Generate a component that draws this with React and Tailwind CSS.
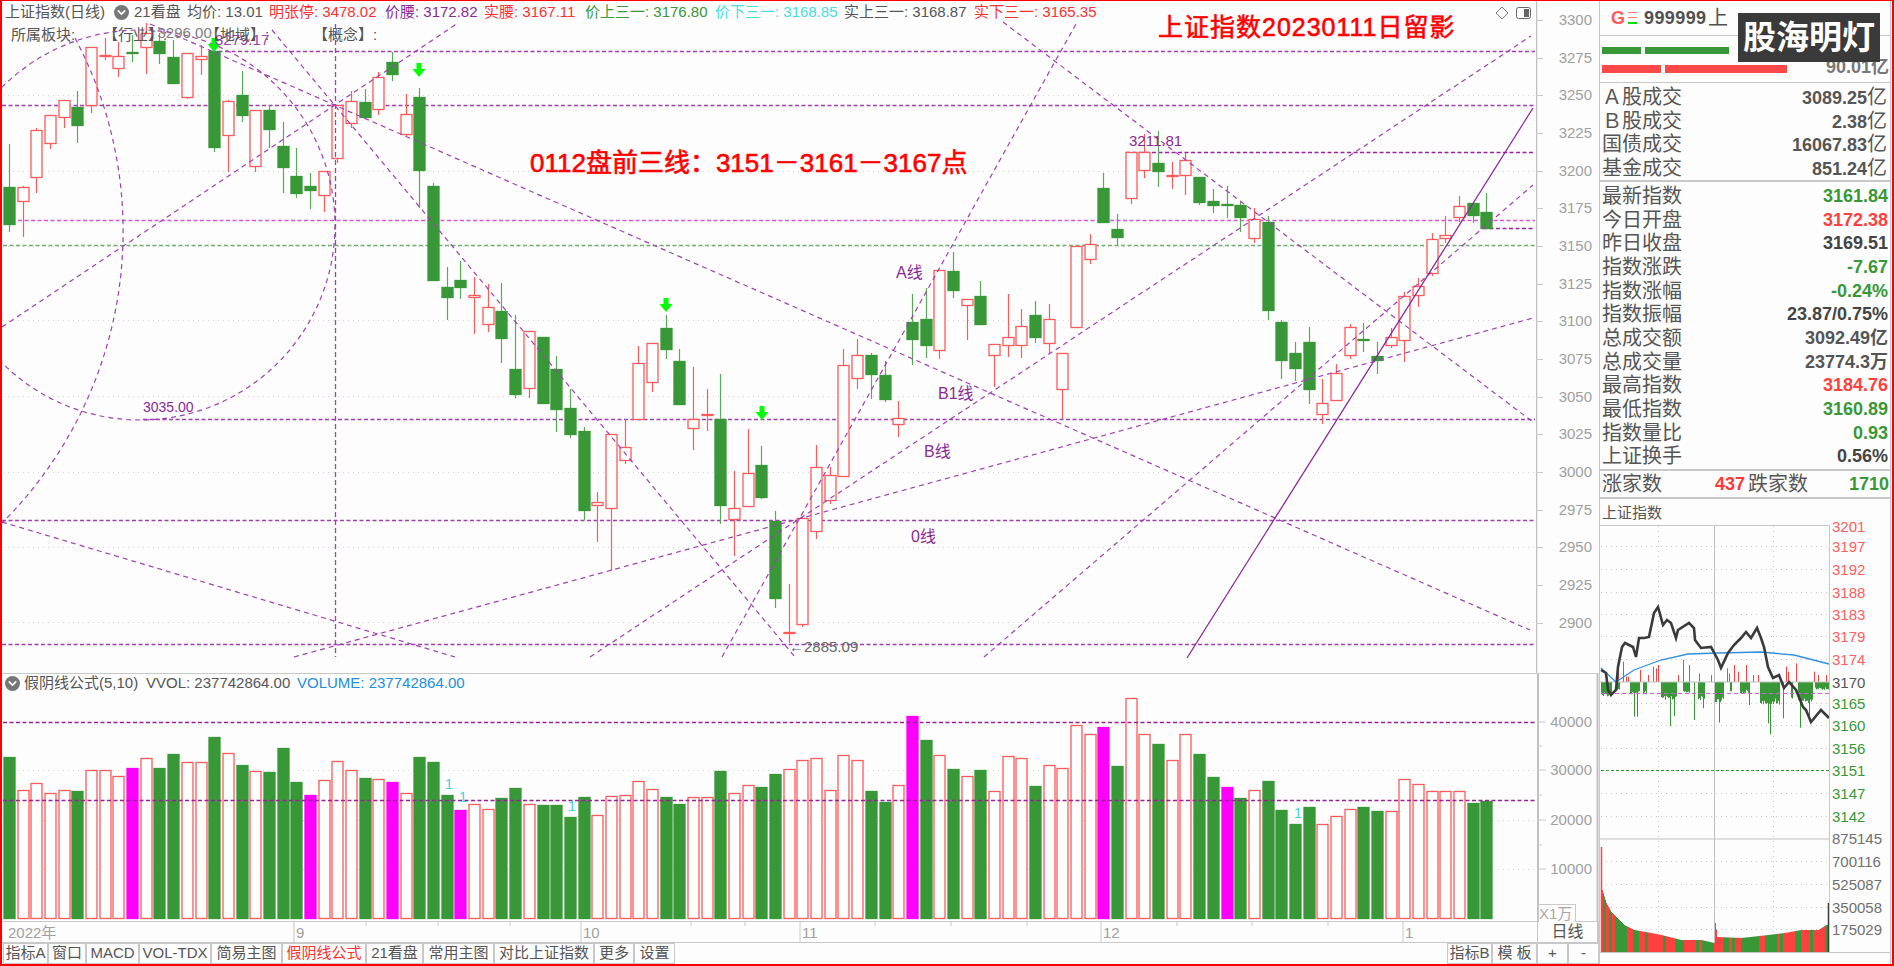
import { ChevronDown } from 'lucide-react'

const GREEN = '#389838'
const RED = '#ff5a5a'
const PURPLE = '#a040b0'

// body top, body bottom, wick top, wick bottom, kind
const candles = [
  [187, 224, 144, 232, 'g'], [187, 201, 186, 237, 'r'], [130, 177, 128, 193, 'r'], [115, 143, 115, 149, 'r'],
  [100, 117, 100, 128, 'r'], [107, 125, 91, 143, 'g'], [47, 105, 47, 113, 'r'], [55, 56, 38, 60, 'r'],
  [56, 68, 42, 77, 'r'], [52, 52, 35, 62, 'g'], [33, 47, 23, 74, 'r'], [41, 53, 33, 64, 'g'],
  [57, 83, 40, 83, 'g'], [53, 97, 53, 99, 'r'], [56, 59, 45, 75, 'r'], [51, 147, 43, 152, 'g'],
  [101, 135, 100, 172, 'r'], [95, 115, 71, 122, 'g'], [110, 166, 110, 172, 'r'], [110, 129, 105, 148, 'g'],
  [146, 167, 122, 193, 'g'], [176, 193, 148, 198, 'g'], [186, 190, 173, 209, 'g'], [171, 195, 171, 212, 'r'],
  [105, 158, 105, 163, 'r'], [101, 123, 91, 128, 'r'], [102, 117, 89, 117, 'g'], [77, 109, 72, 115, 'r'],
  [62, 74, 52, 81, 'g'], [114, 134, 94, 136, 'r'], [97, 170, 88, 208, 'g'], [186, 280, 183, 280, 'g'],
  [287, 297, 267, 320, 'g'], [280, 287, 261, 299, 'g'], [295, 297, 277, 334, 'r'], [307, 324, 284, 332, 'r'],
  [311, 338, 283, 363, 'g'], [369, 394, 315, 398, 'g'], [331, 388, 331, 398, 'r'], [337, 403, 337, 404, 'g'],
  [369, 409, 356, 432, 'g'], [408, 434, 389, 438, 'g'], [431, 510, 427, 520, 'g'], [502, 505, 492, 542, 'r'],
  [434, 508, 434, 571, 'r'], [447, 460, 419, 464, 'r'], [363, 419, 346, 419, 'r'], [343, 382, 343, 392, 'r'],
  [328, 349, 315, 359, 'g'], [361, 404, 349, 404, 'g'], [419, 428, 367, 450, 'r'], [414, 415, 389, 431, 'r'],
  [419, 505, 374, 524, 'g'], [508, 519, 471, 556, 'r'], [473, 506, 429, 506, 'r'], [465, 497, 446, 499, 'g'],
  [521, 598, 511, 608, 'g'], [632, 632, 584, 643, 'r'], [518, 624, 517, 627, 'r'], [467, 531, 445, 539, 'r'],
  [475, 500, 467, 504, 'r'], [365, 476, 349, 476, 'r'], [355, 378, 339, 389, 'r'], [355, 374, 353, 399, 'g'],
  [375, 399, 361, 402, 'g'], [418, 424, 401, 437, 'r'], [322, 339, 294, 365, 'g'], [319, 345, 288, 358, 'g'],
  [270, 350, 270, 359, 'r'], [271, 290, 252, 298, 'g'], [299, 305, 299, 340, 'r'], [296, 324, 281, 325, 'g'],
  [344, 355, 344, 387, 'r'], [337, 345, 294, 357, 'r'], [326, 345, 309, 358, 'r'], [315, 337, 301, 343, 'g'],
  [319, 343, 304, 353, 'r'], [353, 389, 353, 419, 'r'], [246, 327, 246, 327, 'r'], [244, 259, 234, 264, 'r'],
  [188, 222, 173, 223, 'g'], [229, 237, 214, 245, 'g'], [152, 198, 152, 204, 'r'], [152, 170, 134, 178, 'r'],
  [163, 171, 131, 187, 'g'], [175, 175, 162, 189, 'r'], [160, 175, 153, 195, 'r'], [177, 202, 177, 205, 'g'],
  [201, 205, 189, 213, 'g'], [204, 204, 186, 218, 'g'], [205, 217, 202, 232, 'g'], [219, 238, 208, 243, 'r'],
  [222, 310, 216, 320, 'g'], [322, 360, 320, 379, 'g'], [353, 368, 342, 381, 'g'], [342, 389, 327, 404, 'g'],
  [403, 414, 379, 424, 'r'], [373, 400, 364, 400, 'r'], [327, 355, 324, 359, 'r'], [339, 339, 323, 352, 'g'],
  [356, 360, 342, 374, 'g'], [337, 345, 328, 348, 'r'], [296, 340, 292, 362, 'r'], [286, 295, 278, 307, 'r'],
  [239, 273, 233, 276, 'r'], [235, 238, 216, 243, 'r'], [206, 217, 196, 222, 'r'], [203, 215, 203, 223, 'g'],
  [212, 228, 193, 228, 'g'],
]

const volumes = [
  [757, 'g'], [790, 'r'], [783, 'r'], [793, 'r'], [790, 'r'], [791, 'g'], [770, 'r'], [770, 'r'], [776, 'r'], [768, 'm'],
  [758, 'r'], [768, 'g'], [754, 'g'], [762, 'r'], [762, 'r'], [737, 'g'], [753, 'r'], [765, 'g'], [771, 'r'], [772, 'g'],
  [748, 'g'], [782, 'g'], [795, 'm'], [780, 'r'], [761, 'r'], [770, 'r'], [778, 'g'], [779, 'r'], [782, 'm'], [793, 'r'],
  [757, 'g'], [762, 'g'], [795, 'g'], [810, 'm'], [804, 'r'], [809, 'r'], [798, 'g'], [788, 'g'], [804, 'r'], [805, 'g'],
  [805, 'g'], [817, 'g'], [797, 'g'], [815, 'r'], [796, 'r'], [795, 'r'], [781, 'r'], [789, 'r'], [797, 'g'], [804, 'g'],
  [797, 'r'], [797, 'r'], [771, 'g'], [793, 'r'], [785, 'r'], [787, 'g'], [774, 'g'], [769, 'r'], [760, 'r'], [758, 'r'],
  [790, 'r'], [755, 'r'], [760, 'r'], [791, 'g'], [802, 'g'], [785, 'r'], [716, 'm'], [740, 'g'], [755, 'r'], [769, 'g'],
  [776, 'r'], [770, 'g'], [791, 'r'], [756, 'r'], [758, 'r'], [786, 'g'], [765, 'r'], [768, 'r'], [725, 'r'], [734, 'r'],
  [727, 'm'], [766, 'g'], [698, 'r'], [734, 'r'], [744, 'g'], [760, 'r'], [734, 'r'], [754, 'g'], [777, 'g'], [787, 'm'],
  [798, 'g'], [790, 'r'], [781, 'g'], [810, 'g'], [824, 'g'], [807, 'g'], [824, 'r'], [816, 'r'], [809, 'r'], [807, 'g'],
  [811, 'g'], [811, 'r'], [779, 'r'], [784, 'r'], [791, 'r'], [791, 'r'], [791, 'r'], [803, 'g'], [801, 'g'],
]

const xAt = (i) => Math.round(9 + 13.68 * i)

const diagonals = [
  [2, 327, 458, 23],
  [150, 24, 1530, 630],
  [272, 30, 795, 657],
  [294, 657, 1533, 318],
  [590, 657, 1531, 36],
  [722, 657, 1076, 24],
  [1003, 22, 1533, 422],
  [984, 657, 1533, 185],
  [2, 522, 455, 657],
]

const mainLevels = [
  [212, 51, PURPLE], [2, 105, PURPLE], [1126, 152, '#a020a8'], [18, 220, '#d858d8'], [1483, 228, '#a020a8'],
  [3, 245, '#70b070'], [143, 419, PURPLE], [2, 520, PURPLE], [2, 644, PURPLE],
]

const arrows = [[214, 38], [419, 63], [666, 298], [762, 406]]

const priceTicks = [3300, 3275, 3250, 3225, 3200, 3175, 3150, 3125, 3100, 3075, 3050, 3025, 3000, 2975, 2950, 2925, 2900]

const headerItems = [
  ['w-[109px] text-[#555555]', '上证指数(日线)'],
  ['w-[20px]', null],
  ['w-[53px] text-[#555555]', '21看盘'],
  ['w-[82px] text-[#555555]', '均价: 13.01'],
  ['w-[116px] text-[#ff3030]', '明张停: 3478.02'],
  ['w-[99px] text-[#8a2a9a]', '价腰: 3172.82'],
  ['w-[101px] text-[#ff3030]', '实腰: 3167.11'],
  ['w-[130px] text-[#389838]', '价上三一: 3176.80'],
  ['w-[129px] text-[#45e0e0]', '价下三一: 3168.85'],
  ['w-[130px] text-[#555555]', '实上三一: 3168.87'],
  ['w-[130px] text-[#ff3030]', '实下三一: 3165.35'],
]

const tabs = [
  ['w-[45px]', '指标A'], ['w-[38px]', '窗口'], ['w-[53px]', 'MACD'], ['w-[72px]', 'VOL-TDX'], ['w-[71px]', '简易主图'],
  ['w-[84px] text-[#ff3030]', '假阴线公式'], ['w-[57px]', '21看盘'], ['w-[71px]', '常用主图'], ['w-[100px]', '对比上证指数'],
  ['w-[40px]', '更多'], ['w-[41px]', '设置'],
]

const turnover = [
  ['\uFF21股成交', '3089.25', '亿'],
  ['\uFF22股成交', '2.38', '亿'],
  ['国债成交', '16067.83', '亿'],
  ['基金成交', '851.24', '亿'],
]

const indexRows = [
  ['最新指数', '3161.84', 'text-[#389838]'],
  ['今日开盘', '3172.38', 'text-[#ff4040]'],
  ['昨日收盘', '3169.51', 'text-[#444444]'],
  ['指数涨跌', '-7.67', 'text-[#389838]'],
  ['指数涨幅', '-0.24%', 'text-[#389838]'],
  ['指数振幅', '23.87/0.75%', 'text-[#444444]'],
  ['总成交额', '3092.49亿', 'text-[#555555]'],
  ['总成交量', '23774.3万', 'text-[#555555]'],
  ['最高指数', '3184.76', 'text-[#ff4040]'],
  ['最低指数', '3160.89', 'text-[#389838]'],
  ['指数量比', '0.93', 'text-[#389838]'],
  ['上证换手', '0.56%', 'text-[#444444]'],
]

const miniLabels = [
  [526, '3201', '#ff6060'], [546, '3197', '#ff6060'], [569, '3192', '#ff6060'], [592, '3188', '#ff6060'], [614, '3183', '#ff6060'],
  [636, '3179', '#ff6060'], [659, '3174', '#ff6060'], [682, '3170', '#555555'], [703, '3165', '#389838'], [725, '3160', '#389838'],
  [748, '3156', '#389838'], [770, '3151', '#389838'], [793, '3147', '#389838'], [816, '3142', '#389838'],
  [838, '875145', '#707070'], [861, '700116', '#707070'], [884, '525087', '#707070'], [907, '350058', '#707070'], [929, '175029', '#707070'],
]

const pricePath = [
  [1600, 670], [1605, 673], [1607, 690], [1610, 695], [1615, 690], [1617, 667], [1621, 647], [1624, 643], [1632, 647], [1635, 657],
  [1638, 638], [1643, 638], [1648, 637], [1653, 613], [1657, 607], [1662, 625], [1666, 620], [1670, 623], [1675, 638], [1677, 630], [1688, 623],
  [1693, 628], [1694, 640], [1700, 648], [1710, 647], [1717, 660], [1720, 668], [1727, 653], [1733, 645], [1740, 638], [1745, 632],
  [1750, 638], [1756, 628], [1760, 638], [1763, 647], [1767, 667], [1772, 678], [1778, 675], [1783, 688], [1788, 682], [1795, 690],
  [1802, 707], [1805, 710], [1810, 722], [1820, 710], [1828, 718],
]
const avgPath = [[1600, 668], [1615, 682], [1633, 670], [1660, 660], [1687, 654], [1717, 653], [1760, 652], [1793, 655], [1828, 664]]

const redSpikes = [
  [350, 65], [365, 65], [375, 110], [380, 110], [417, 90], [440, 105], [455, 80], [465, 85], [470, 75], [530, 105], [545, 60], [565, 75],
  [593, 100], [630, 105], [677, 85], [685, 100], [700, 75], [710, 95], [735, 75], [755, 105], [770, 105], [855, 80], [860, 95], [885, 70],
  [940, 95], [952, 105], [975, 105],
]
const greenRuns = [
  [300, 330, 170], [345, 355, 155], [385, 415, 165], [425, 435, 165], [480, 525, 185], [545, 565, 165], [590, 610, 180], [640, 668, 190],
  [685, 690, 160], [715, 745, 160], [775, 835, 195], [870, 875, 185], [890, 935, 190], [940, 985, 150],
]
const greenPeaks = [[400, 230], [407, 230], [508, 258], [520, 228], [578, 240], [605, 205], [654, 248], [745, 195], [800, 250], [808, 283], [845, 235], [897, 263], [925, 230]]

const volumeEnvelope = [
  [1601, 890], [1605, 903], [1610, 912], [1615, 917], [1623, 925], [1633, 930], [1650, 933], [1660, 935], [1680, 940], [1700, 940],
  [1713, 943], [1714, 923], [1716, 937], [1740, 938], [1767, 935], [1783, 933], [1800, 930], [1817, 930], [1825, 925], [1827, 925],
]

const noise = (i) => Math.abs(Math.sin(i * 12.9898) * 43758.5453) % 1

const points = (list) => list.map(([x, y]) => `${x},${y}`).join(' ')

function envelopeAt(x) {
  for (let i = 1; i < volumeEnvelope.length; i++) {
    const [x0, y0] = volumeEnvelope[i - 1]
    const [x1, y1] = volumeEnvelope[i]
    if (x <= x1) return y0 + ((y1 - y0) * (x - x0)) / (x1 - x0)
  }
  return 925
}

function DownBadge() {
  return (
    <span className="flex h-[15px] w-[15px] items-center justify-center rounded-full bg-[#777777]">
      <ChevronDown className="h-[13px] w-[13px] text-white" strokeWidth={3} />
    </span>
  )
}

function MainChart() {
  return (
    <svg className="block h-[672px] w-[1534px]" viewBox="2 1 1534 672">
      {[95, 171, 246, 320, 396, 472, 547, 622].map((y) => (
        <line key={y} x1="3" x2="1535" y1={y + 0.5} y2={y + 0.5} stroke="#d4d4d4" strokeDasharray="1 4" />
      ))}
      {mainLevels.map(([x, y, color]) => (
        <line key={y} x1={x} x2="1535" y1={y + 0.5} y2={y + 0.5} stroke={color} strokeWidth="1.3" strokeDasharray="4 2.5" />
      ))}
      {candles.map(([top, bottom, wickTop, wickBottom, kind], i) => {
        const x = xAt(i)
        const isRed = kind === 'r'
        return (
          <g key={i}>
            <line x1={x + 0.5} x2={x + 0.5} y1={wickTop} y2={wickBottom} stroke={isRed ? RED : '#5aa85a'} strokeWidth="1.2" />
            <rect
              x={x - 5}
              y={top + 0.5}
              width="11"
              height={Math.max(bottom - top, 1)}
              fill={isRed ? '#ffffff' : GREEN}
              stroke={isRed ? RED : GREEN}
              strokeWidth="1.3"
            />
          </g>
        )
      })}
      {diagonals.map(([x1, y1, x2, y2], i) => (
        <line key={i} x1={x1} y1={y1} x2={x2} y2={y2} stroke={PURPLE} strokeWidth="1.2" strokeDasharray="5 4" />
      ))}
      <line x1="335.5" x2="335.5" y1="24" y2="657" stroke={PURPLE} strokeWidth="1.3" strokeDasharray="5 3" />
      <circle cx="140" cy="225" r="195" fill="none" stroke={PURPLE} strokeWidth="1.2" strokeDasharray="5 4" />
      <path d="M75 38 A412 412 0 0 1 2 523" fill="none" stroke={PURPLE} strokeWidth="1.2" strokeDasharray="5 4" />
      <line x1="1187" y1="658" x2="1533" y2="108" stroke="#8a2a96" strokeWidth="1.3" />
      {arrows.map(([x, y]) => (
        <polygon
          key={x}
          points={`${x - 2.5},${y} ${x + 2.5},${y} ${x + 2.5},${y + 6} ${x + 6.5},${y + 6} ${x},${y + 14} ${x - 6.5},${y + 6} ${x - 2.5},${y + 6}`}
          fill="#00ff00"
        />
      ))}
      <text x="150" y="38" fontSize="15" fill="#808080">↑3296.00</text>
      <text x="215" y="45" fontSize="15" fill="#a040b0">3279.17</text>
      <text x="143" y="412" fontSize="14" fill="#8a2a96">3035.00</text>
      <text x="1129" y="146" fontSize="15" fill="#8a2a96">3211.81</text>
      <text x="896" y="278" fontSize="16" fill="#8a2a96">A线</text>
      <text x="938" y="399" fontSize="16" fill="#8a2a96">B1线</text>
      <text x="924" y="457" fontSize="16" fill="#8a2a96">B线</text>
      <text x="911" y="542" fontSize="16" fill="#8a2a96">0线</text>
      <text x="789" y="652" fontSize="15" fill="#666666">←2885.09</text>
      <text x="530" y="172" fontSize="26" stroke="#ff0000" strokeWidth="0.6" fill="#ff0000">
        {'0112盘前三线\uFF1A3151\uFF0D3161\uFF0D3167点'}
      </text>
      <text x="1158" y="36" fontSize="25" letterSpacing="1" stroke="#ff0000" strokeWidth="0.6" fill="#ff0000">上证指数20230111日留影</text>
      <polygon points="1502,7 1508,13 1502,19 1496,13" fill="none" stroke="#777777" />
      <rect x="1516.5" y="7.5" width="14" height="11" rx="2" fill="#ffffff" stroke="#666666" />
      <rect x="1524" y="9" width="5" height="8" fill="#666666" />
    </svg>
  )
}

function PriceAxis() {
  return (
    <svg className="block h-[672px] w-[63px]" viewBox="1536 1 63 672">
      <line x1="1536.5" x2="1536.5" y1="1" y2="673" stroke="#c0c0c0" strokeWidth="1.5" />
      {priceTicks.map((price, i) => {
        const y = Math.round(20 + i * 37.67)
        return (
          <g key={price}>
            <line x1="1536" x2="1543" y1={y + 0.5} y2={y + 0.5} stroke="#c8c8c8" />
            <text x="1592" y={y + 5} fontSize="15" textAnchor="end" fill="#a0a0a0">{price}</text>
          </g>
        )
      })}
    </svg>
  )
}

function VolumeChart() {
  return (
    <svg className="block h-[248px] w-[1535px]" viewBox="2 674 1535 248">
      {[770, 820, 869].map((y) => (
        <line key={y} x1="3" x2="1535" y1={y + 0.5} y2={y + 0.5} stroke="#d4d4d4" strokeDasharray="1 4" />
      ))}
      {volumes.map(([top, kind], i) => {
        const x = xAt(i)
        return (
          <rect
            key={i}
            x={x - 5}
            y={top + 0.5}
            width="11"
            height={918 - top}
            fill={kind === 'g' ? GREEN : kind === 'm' ? '#ff00ff' : '#ffffff'}
            stroke={kind === 'g' ? GREEN : kind === 'm' ? '#ff00ff' : RED}
            strokeWidth="1.3"
          />
        )
      })}
      {[722, 800].map((y) => (
        <line key={y} x1="3" x2="1535" y1={y + 0.5} y2={y + 0.5} stroke="#9a209a" strokeWidth="1.3" strokeDasharray="4 2.5" />
      ))}
      {[[449, 789], [463, 802], [572, 811], [1298, 818]].map(([x, y]) => (
        <text key={x} x={x} y={y} fontSize="15" textAnchor="middle" fill="#45d8d8">1</text>
      ))}
    </svg>
  )
}

function VolumeAxis() {
  return (
    <svg className="block h-[248px] w-[62px]" viewBox="1537 674 62 248">
      <line x1="1538" x2="1538" y1="674" y2="922" stroke="#c0c0c0" strokeWidth="2" />
      <line x1="1597.5" x2="1597.5" y1="674" y2="922" stroke="#c0c0c0" strokeWidth="2" />
      {[[40000, 722], [30000, 770], [20000, 820], [10000, 869]].map(([value, y]) => (
        <g key={value}>
          <line x1="1538" x2="1546" y1={y} y2={y} stroke="#c8c8c8" />
          <text x="1592" y={y + 5} fontSize="15" textAnchor="end" fill="#a0a0a0">{value}</text>
        </g>
      ))}
      {[746, 795, 845].map((y) => (
        <line key={y} x1="1538" x2="1542" y1={y} y2={y} stroke="#c8c8c8" />
      ))}
      <rect x="1538.5" y="904.5" width="37" height="18" fill="#fdfdfd" stroke="#c8c8c8" />
      <text x="1539" y="919" fontSize="15" fill="#a8a8a8">X1万</text>
    </svg>
  )
}

function DateAxis() {
  return (
    <svg className="block h-[20px] w-[1535px]" viewBox="2 922 1535 20">
      {[366, 438, 510, 691, 745, 875, 951, 1027, 1177, 1252, 1328].map((x) => (
        <line key={x} x1={x} x2={x} y1="922" y2="926" stroke="#c8c8c8" />
      ))}
      {[[294, '9'], [581, '10'], [800, '11'], [1101, '12'], [1403, '1']].map(([x, label]) => (
        <g key={x}>
          <line x1={x} x2={x} y1="922" y2="942" stroke="#c8c8c8" />
          <text x={x + 2} y="938" fontSize="15" fill="#a0a0a0">{label}</text>
        </g>
      ))}
      <text x="8" y="938" fontSize="15" fill="#a0a0a0">2022年</text>
    </svg>
  )
}

function MiniChart() {
  const bars = []
  for (let x = 1600; x <= 1827; x++) {
    const z = (x - 1500) * 3
    const run = greenRuns.find(([a, b]) => z >= a && z <= b)
    const peak = greenPeaks.find(([p]) => Math.abs(p - z) < 2)
    const depth = peak ? peak[1] : run ? 125 + (run[2] - 125) * (0.7 + 0.3 * noise(x)) : 125
    if (depth > 125) bars.push(<line key={`g${x}`} x1={x + 0.5} x2={x + 0.5} y1="682" y2={640 + depth / 3} stroke={GREEN} />)
    const spike = redSpikes.find(([p]) => Math.abs(p - z) < 2)
    if (spike) bars.push(<line key={`r${x}`} x1={x + 0.5} x2={x + 0.5} y1="682" y2={640 + spike[1] / 3} stroke="#ff4040" />)
  }
  const volumeBars = []
  for (let x = 1601; x <= 1827; x++) {
    const isRed = noise(Math.floor(x / 3)) > 0.5
    volumeBars.push(<line key={x} x1={x + 0.5} x2={x + 0.5} y1={envelopeAt(x)} y2="952" stroke={isRed ? '#ff4040' : GREEN} />)
  }
  return (
    <svg className="block h-[439px] w-[291px] overflow-visible" viewBox="1599 525 291 439">
      <line x1="1599" x2="1828" y1="525.5" y2="525.5" stroke="#c8c8c8" />
      {[546, 569, 592, 614, 636, 659, 703, 725, 748, 793, 816, 861, 884, 907, 929].map((y) => (
        <line key={y} x1="1600" x2="1828" y1={y + 0.5} y2={y + 0.5} stroke="#c8c8c8" strokeDasharray="1 4" />
      ))}
      <line x1="1657.5" x2="1657.5" y1="526" y2="952" stroke="#c8c8c8" strokeDasharray="1 4" />
      <line x1="1772.5" x2="1772.5" y1="526" y2="952" stroke="#c8c8c8" strokeDasharray="1 4" />
      <line x1="1713.5" x2="1713.5" y1="526" y2="952" stroke="#c0c0c0" />
      <line x1="1600" x2="1828" y1="770.5" y2="770.5" stroke="#389838" strokeDasharray="3 2" />
      {bars}
      <line x1="1599" x2="1828" y1="682" y2="682" stroke="#c0c0c0" />
      <line x1="1600" x2="1828" y1="693.5" y2="693.5" stroke="#d060d8" strokeWidth="1.2" strokeDasharray="4 3" />
      <polyline points={points(avgPath)} fill="none" stroke="#3090e0" strokeWidth="1.3" />
      <polyline points={points(pricePath)} fill="none" stroke="#3a3a3a" strokeWidth="2.6" />
      <line x1="1599" x2="1828" y1="839" y2="839" stroke="#c0c0c0" />
      {volumeBars}
      <line x1="1600.5" x2="1600.5" y1="847" y2="952" stroke="#ff4040" strokeWidth="1.5" />
      <line x1="1827.5" x2="1827.5" y1="903" y2="952" stroke="#3a3a3a" strokeWidth="1.5" />
      <line x1="1828.5" x2="1828.5" y1="525" y2="952" stroke="#c8c8c8" />
      <line x1="1599" x2="1890" y1="952.5" y2="952.5" stroke="#c8c8c8" />
      {miniLabels.map(([y, label, color]) => (
        <text key={label} x="1831" y={y + 6} fontSize="15" fill={color}>{label}</text>
      ))}
    </svg>
  )
}

function InfoPanel() {
  return (
    <div className="relative flex h-full w-[292px] flex-col border-x border-[#c8c8c8] bg-[#fdfdfd]">
      <div className="flex h-[35px] shrink-0 items-center border-b border-[#c8c8c8] pl-[11px]">
        <span className="w-[17px] text-[18px] font-bold text-[#ff5a5a]">G</span>
        <span className="flex h-[12px] w-[16px] flex-col justify-between">
          <span className="block h-px w-[9px] bg-[#ff8080]" />
          <span className="block h-px w-[9px] bg-[#ff8080]" />
          <span className="block h-[2px] w-[9px] bg-[#00e000]" />
        </span>
        <span className="w-[64px] text-[18px] font-bold tracking-[0.4px] text-[#505050]">999999</span>
        <span className="text-[20px] text-[#505050]">上</span>
      </div>
      <div className="relative h-[47px] shrink-0 border-b border-[#c8c8c8] pl-[2px] pt-[11px]">
        <div className="flex gap-[4px]">
          <span className="h-[7px] w-[39px] bg-[#389838]" />
          <span className="h-[7px] w-[84px] bg-[#389838]" />
        </div>
        <div className="mt-[11px] flex gap-[4px]">
          <span className="h-[8px] w-[59px] bg-[#ff4848]" />
          <span className="h-[8px] w-[122px] bg-[#ff4848]" />
        </div>
        <span className="absolute right-[1px] top-[21px] text-[18px] font-bold leading-[20px] text-[#777777]">90.01亿</span>
      </div>
      <div className="absolute right-[10px] top-[12px] flex h-[49px] w-[142px] items-center justify-center bg-[#3a3a3a] text-[33px] font-bold leading-none text-white">
        股海明灯
      </div>
      <div className="flex h-[99px] shrink-0 flex-col border-b-2 border-[#c8c8c8] pl-[2px] pr-[3px] pt-[2px]">
        {turnover.map(([label, value, unit]) => (
          <div key={label} className="flex h-[24px] items-center justify-between text-[20px] leading-none text-[#555555]">
            <span>{label}</span>
            <span>
              <span className="text-[18px] font-bold">{value}</span>
              {unit}
            </span>
          </div>
        ))}
      </div>
      <div className="flex h-[289px] shrink-0 flex-col border-b-2 border-[#c8c8c8] pl-[2px] pr-[2px] pt-[2px]">
        {indexRows.map(([label, value, color]) => (
          <div key={label} className="flex h-[23.7px] items-center justify-between text-[20px] leading-none text-[#555555]">
            <span>{label}</span>
            <span className={`text-[18px] font-bold ${color}`}>{value}</span>
          </div>
        ))}
      </div>
      <div className="flex h-[28px] shrink-0 items-center border-b-2 border-[#c8c8c8] pl-[2px] pr-[1px] text-[20px] leading-none text-[#555555]">
        <span className="w-[113px]">涨家数</span>
        <span className="w-[33px] text-[18px] font-bold text-[#ff3838]">437</span>
        <span className="flex-1">跌家数</span>
        <span className="text-[18px] font-bold text-[#389838]">1710</span>
      </div>
      <div className="flex h-[26px] shrink-0 items-center pl-[2px] text-[15px] leading-none text-[#555555]">上证指数</div>
      <MiniChart />
    </div>
  )
}

export default function App() {
  return (
    <div className="flex h-[966px] w-[1894px] overflow-hidden border-y-2 border-x-2 border-t-[1px] border-[#ff0000] bg-[#fdfdfd] text-[15px] [font-family:'Liberation_Sans','Noto_Sans_CJK_SC',sans-serif]">
      <div className="flex h-full w-[1597px] shrink-0 flex-col">
        <div className="relative flex h-[673px] shrink-0 border-b border-[#c8c8c8]">
          <MainChart />
          <PriceAxis />
          <div className="absolute left-[3px] top-0 flex h-[22px] items-center whitespace-nowrap">
            {headerItems.map(([cls, text], i) => (
              <span key={i} className={cls}>{text || <DownBadge />}</span>
            ))}
          </div>
          <div className="absolute left-[9px] top-[24px] flex h-[20px] items-center whitespace-nowrap text-[#555555]">
            <span className="w-[92px]">所属板块:</span>
            <span className="w-[102px]">【行业】:</span>
            <span className="w-[108px]">【地域】:</span>
            <span>【概念】:</span>
          </div>
        </div>
        <div className="relative flex h-[248px] shrink-0 border-b border-[#c8c8c8]">
          <VolumeChart />
          <VolumeAxis />
          <div className="absolute left-[3px] top-0 flex h-[18px] items-center whitespace-nowrap text-[#555555]">
            <span className="w-[19px]"><DownBadge /></span>
            <span className="w-[122px]">假阴线公式(5,10)</span>
            <span className="w-[151px]">VVOL: 237742864.00</span>
            <span className="text-[#2090e0]">VOLUME: 237742864.00</span>
          </div>
        </div>
        <div className="flex h-[21px] shrink-0 border-b border-[#c8c8c8]">
          <DateAxis />
          <div className="flex w-[62px] items-center justify-center border-l border-r-2 border-[#c8c8c8] text-[16px] text-[#555555]">日线</div>
        </div>
        <div className="flex h-[21px] shrink-0 items-stretch pl-px text-[#555555]">
          {tabs.map(([cls, label]) => (
            <span key={label} className={`flex items-center justify-center border border-[#c8c8c8] ${cls}`}>{label}</span>
          ))}
          <span className="flex-1" />
          <span className="flex w-[45px] items-center justify-center border border-[#c8c8c8]">指标B</span>
          <span className="flex w-[45px] items-center justify-center border border-[#c8c8c8]">模 板</span>
          <span className="flex w-[31px] items-center justify-center border border-[#c8c8c8]">+</span>
          <span className="flex w-[31px] items-center justify-center border border-[#c8c8c8]">-</span>
        </div>
      </div>
      <InfoPanel />
    </div>
  )
}
